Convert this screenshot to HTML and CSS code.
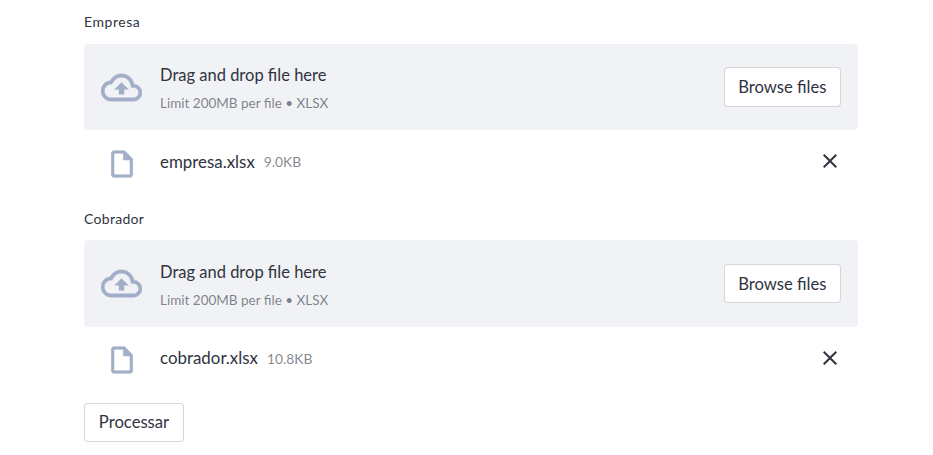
FILE: index.html
```html
<!DOCTYPE html>
<html lang="pt">
<head>
<meta charset="utf-8">
<title>Upload</title>
<link rel="stylesheet" href="styles.css">
</head>
<body>
<main class="page">
  <section class="uploader">
    <label class="label label-a">Empresa</label>
    <div class="dropzone">
      <svg class="cloud" viewBox="0 0 24 24"><path d="M19.35 10.04C18.67 6.59 15.64 4 12 4 9.11 4 6.6 5.64 5.35 8.04 2.34 8.36 0 10.91 0 14c0 3.31 2.69 6 6 6h13c2.76 0 5-2.24 5-5 0-2.64-2.05-4.78-4.65-4.96zM19 18H6c-2.21 0-4-1.79-4-4 0-2.05 1.53-3.76 3.56-3.97l1.07-.11.5-.95C8.08 7.14 9.94 6 12 6c2.62 0 4.88 1.86 5.39 4.43l.3 1.5 1.53.11c1.56.1 2.78 1.41 2.78 2.96 0 1.65-1.35 3-3 3zM8 13h2.55v3h2.9v-3H16l-4-4z"/></svg>
      <div class="instructions">
        <span class="drag">Drag and drop file here</span>
        <small class="limit">Limit 200MB per file • XLSX</small>
      </div>
      <button class="btn">Browse files</button>
    </div>
    <div class="file">
      <svg class="doc" viewBox="0 0 24 24"><path d="M14 2H6c-1.1 0-1.99.9-1.99 2L4 20c0 1.1.89 2 1.99 2H18c1.1 0 2-.9 2-2V8l-6-6zM6 20V4h7v5h5v11H6z"/></svg>
      <span class="name">empresa.xlsx</span>
      <small class="size">9.0KB</small>
      <svg class="close" viewBox="0 0 24 24"><path d="M19 6.41L17.59 5 12 10.59 6.41 5 5 6.41 10.59 12 5 17.59 6.41 19 12 13.41 17.59 19 19 17.59 13.41 12z"/></svg>
    </div>
  </section>
  <section class="uploader">
    <label class="label label-b">Cobrador</label>
    <div class="dropzone">
      <svg class="cloud" viewBox="0 0 24 24"><path d="M19.35 10.04C18.67 6.59 15.64 4 12 4 9.11 4 6.6 5.64 5.35 8.04 2.34 8.36 0 10.91 0 14c0 3.31 2.69 6 6 6h13c2.76 0 5-2.24 5-5 0-2.64-2.05-4.78-4.65-4.96zM19 18H6c-2.21 0-4-1.79-4-4 0-2.05 1.53-3.76 3.56-3.97l1.07-.11.5-.95C8.08 7.14 9.94 6 12 6c2.62 0 4.88 1.86 5.39 4.43l.3 1.5 1.53.11c1.56.1 2.78 1.41 2.78 2.96 0 1.65-1.35 3-3 3zM8 13h2.55v3h2.9v-3H16l-4-4z"/></svg>
      <div class="instructions">
        <span class="drag">Drag and drop file here</span>
        <small class="limit">Limit 200MB per file • XLSX</small>
      </div>
      <button class="btn">Browse files</button>
    </div>
    <div class="file file-b">
      <svg class="doc" viewBox="0 0 24 24"><path d="M14 2H6c-1.1 0-1.99.9-1.99 2L4 20c0 1.1.89 2 1.99 2H18c1.1 0 2-.9 2-2V8l-6-6zM6 20V4h7v5h5v11H6z"/></svg>
      <span class="name">cobrador.xlsx</span>
      <small class="size">10.8KB</small>
      <svg class="close" viewBox="0 0 24 24"><path d="M19 6.41L17.59 5 12 10.59 6.41 5 5 6.41 10.59 12 5 17.59 6.41 19 12 13.41 17.59 19 19 17.59 13.41 12z"/></svg>
    </div>
  </section>
  <button class="btn btn-process">Processar</button>
</main>
</body>
</html>
```

FILE: styles.css
```css
* { box-sizing: border-box; }
html, body { margin: 0; background: #fff; }
body { font-family: "Lato", "Noto Sans", sans-serif; color: #31333f; overflow: hidden; }
.page { padding: 12px 75px 0 84px; display: flex; flex-direction: column; align-items: stretch; }
.uploader { display: flex; flex-direction: column; margin-bottom: 12.2px; }
.uploader + .uploader { margin-top: 1.8px; }
.label { display: block; font-size: 14px; line-height: 20px; margin-bottom: 12px; letter-spacing: .3px; }
.label-a { letter-spacing: .55px; }
.label-b { margin-top: .6px; margin-bottom: 11.4px; }
.dropzone { height: 86.4px; flex: none; background: #f0f2f6; border-radius: 4px; padding: 0 17px; display: flex; align-items: center; }
.cloud { width: 41px; height: 41px; fill: #a3afc9; stroke: #a3afc9; stroke-width: .25; flex: none; margin-right: 18px; }
.instructions { display: flex; flex-direction: column; flex: 1; gap: 6px; padding-top: 2px; }
.drag { font-size: 16.5px; line-height: 24px; }
.limit { font-size: 13.5px; line-height: 20px; color: rgba(49, 51, 63, .6); }
.btn { font: inherit; color: #31333f; background: #fff; border: 1px solid rgba(49, 51, 63, .2); border-radius: 4px; font-size: 16.65px; height: 39.6px; padding: 0 13.5px; }
.btn-process { align-self: flex-start; width: 100px; height: 39px; padding: 0; }
.file { display: flex; align-items: center; height: 64px; padding-left: 22px; padding-right: 16px; }
.doc { width: 32px; height: 32px; fill: #a3afc9; stroke: #a3afc9; stroke-width: .4; flex: none; margin: 3px 22px 0 0; }
.name { font-size: 16.9px; line-height: 24px; margin: 0 9px 1px 0; }
.size { font-size: 13.8px; color: rgba(49, 51, 63, .6); flex: 1; margin-bottom: 1px; }
.close { width: 24px; height: 24px; fill: #31333f; flex: none; margin-bottom: 3px; }
.file-b .close { margin-bottom: 2px; }
```
